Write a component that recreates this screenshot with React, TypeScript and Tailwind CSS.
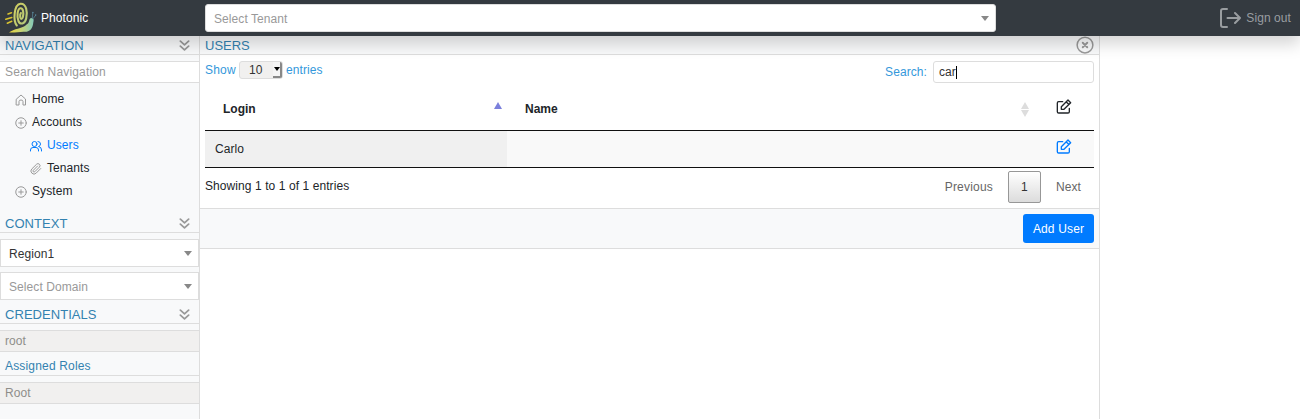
import React from "react";

function Icon({ size, width = 2, className = "", children }: { size: number; width?: number; className?: string; children: React.ReactNode }) {
  return (
    <svg width={size} height={size} viewBox="0 0 24 24" fill="none" stroke="currentColor" strokeWidth={width} strokeLinecap="round" strokeLinejoin="round" className={className}>
      {children}
    </svg>
  );
}

function Snail() {
  return (
    <svg width="32" height="32" viewBox="0 0 32 32" fill="none" strokeLinecap="round">
      <defs>
        <linearGradient id="shell" x1="0" y1="0" x2="1" y2="1">
          <stop offset="0" stopColor="#d2cf62" />
          <stop offset="1" stopColor="#b3c97c" />
        </linearGradient>
        <linearGradient id="body" x1="0" y1="0" x2="1" y2="0">
          <stop offset="0" stopColor="#e6d33c" />
          <stop offset="0.55" stopColor="#c2d27a" />
          <stop offset="1" stopColor="#83c9b9" />
        </linearGradient>
      </defs>
      <path d="M3 12 6.500 10.700M.8 17.200l6-1.700M2.300 21.200l4.500-2" stroke="#d9c431" strokeWidth="1.5" />
      <path d="M11.800 23.500C8 19 8.800 2.500 15.500 1.800c6-.4 7.200 8.400 5.700 14.700-1.300 5.500-6 6.700-7.800 2.500-1.700-4.500-1-12.200 2-12.700 3-.4 3.400 5.200 2.500 8.700-.7 2.600-2.400 2.400-2.700.2-.2-1.800 0-3.500.7-4.200" stroke="url(#shell)" strokeWidth="2.100" />
      <path d="M4 30.500C9 26.500 17 26.500 20.500 23.500c1.500-1.700 2.500-1.500 3.200-3.300.7-2 .8-4.200 2.900-4.200 2.500.1 2.200 2.300 1.700 4.500C27.700 26 25.500 30 19.500 29.800c-5-.2-10 1.200-15.500.7Z" fill="url(#body)" />
      <path d="m27.300 16 .5-5M28.200 16.500l2.300-3" stroke="#4f7484" strokeWidth="1" />
      <path d="M27.900 10.500v.1M30.700 13v.1" stroke="#5f97ad" strokeWidth="1.3" />
    </svg>
  );
}

function Heading({ children }: { children: React.ReactNode }) {
  return (
    <div className="flex h-[19px] shrink-0 items-center justify-between border-b border-[#ddd] pl-[5px] pr-[9px] text-[13px] leading-[18px] tracking-[0.05px] text-[#3382b0]">
      <span className="pt-px">{children}</span>
      <Icon size={11} width={3.8} className="text-[#999]">
        <path d="m3 2.500 9 8 9-8M3 13.500l9 8 9-8" />
      </Icon>
    </div>
  );
}

function Caret() {
  return <span className="border-x-4 border-t-[5px] border-x-transparent border-t-[#888]" />;
}

function EditIcon({ className }: { className: string }) {
  return (
    <Icon size={16} className={className}>
      <path d="M10 4H4a2 2 0 0 0-2 2v13a2 2 0 0 0 2 2h14a2 2 0 0 0 2-2v-5" />
      <path d="m18 1.500 4 4L12 15.500H8v-4ZM15.500 4.500l3.500 3.500" />
    </Icon>
  );
}

const plus = (
  <>
    <circle cx="12" cy="12" r="10.500" />
    <path d="M12 7.500v9M7.500 12h9" />
  </>
);

function TreeItem({ label, icon, nested, active }: { label: string; icon: React.ReactNode; nested?: boolean; active?: boolean }) {
  return (
    <div className={`flex h-[23px] items-center ${nested ? "pl-[30px]" : "pl-[15px]"} ${active ? "text-[#007bff]" : "text-[#212529]"}`}>
      <span className={`mr-[5px] w-3 pt-[3px] ${active ? "text-[#007bff]" : "text-[#999]"}`}>{icon}</span>
      {label}
    </div>
  );
}

function SideSelect({ text, muted }: { text: string; muted?: boolean }) {
  return (
    <div className={`flex h-7 shrink-0 items-center justify-between border border-[#ddd] bg-white pl-2 pr-[6px] ${muted ? "text-[#999]" : "text-[#333]"}`}>
      <span className="pt-[2px]">{text}</span>
      <Caret />
    </div>
  );
}

function ReadOnly({ text }: { text: string }) {
  return <div className="mt-1.5 h-[22px] shrink-0 border-y border-[#ddd] bg-[#f1f0ef] pl-[5px] leading-5 text-[#8e8e8a]">{text}</div>;
}

export default function App() {
  return (
    <div className="flex h-[419px] w-[1300px] flex-col overflow-hidden bg-white font-['Liberation_Sans',Arial,sans-serif] text-xs tracking-[0.08px] text-[#212529]">
      <header className="relative z-10 flex h-9 shrink-0 items-center bg-[#343a40] shadow-[0_8px_16px_rgba(0,0,0,0.17)]">
        <div className="flex w-[205px] items-center gap-[4px] pl-[5px] text-white">
          <Snail />
          Photonic
        </div>
        <div className="flex h-7 w-[791px] items-center justify-between rounded-[3px] border border-[#ddd] bg-white pl-2 pr-1.5 text-[#999]">
          <span className="pt-[2px]">Select Tenant</span>
          <Caret />
        </div>
        <div className="ml-auto flex items-center gap-[5px] pr-[9px] text-[#999da0]">
          <svg width="21" height="20" viewBox="0 0 21 20" fill="none" stroke="currentColor" strokeWidth="2" strokeLinecap="round" strokeLinejoin="round">
            <path d="M7 1H3Q1 1 1 3v14q0 2 2 2h4M7.500 10H20M15 5l5 5-5 5" />
          </svg>
          Sign out
        </div>
      </header>

      <div className="flex min-h-0 flex-1">
        <aside className="flex w-[200px] flex-col border-r border-[#ddd] bg-[#f8f9fa]">
          <Heading>NAVIGATION</Heading>
          <div className="mt-1.5 h-[22px] shrink-0 border-y border-[#ddd] bg-white pl-[5px] leading-5 tracking-[0.17px] text-[#999]">Search Navigation</div>
          <nav className="mb-3 mt-1">
            <TreeItem label="Home" icon={<Icon size={12}><path d="M3 10 12 2l9 8v12h-5v-7q0-3-4-3t-4 3v7H3Z" /></Icon>} />
            <TreeItem label="Accounts" icon={<Icon size={12}>{plus}</Icon>} />
            <TreeItem nested active label="Users" icon={<Icon size={12}><circle cx="9" cy="8" r="5" /><path d="M1 22v-2q0-5 5-5h6q5 0 5 5v2M16 3q5 0 5 5 0 4-4 5 6 1 6 7v2" /></Icon>} />
            <TreeItem
              nested
              label="Tenants"
              icon={
                <Icon size={12}>
                  <path d="m21.500 11-9.200 9.300a6 6 0 0 1-8.600-8.500l9.400-9.300a4 4 0 0 1 5.700 5.700l-9.300 9.300a2 2 0 0 1-2.900-2.900l8.500-8.500" />
                </Icon>
              }
            />
            <TreeItem label="System" icon={<Icon size={12}>{plus}</Icon>} />
          </nav>
          <Heading>CONTEXT</Heading>
          <div className="mb-[5px] mt-1.5 flex flex-col gap-[5px]">
            <SideSelect text="Region1" />
            <SideSelect text="Select Domain" muted />
          </div>
          <Heading>CREDENTIALS</Heading>
          <ReadOnly text="root" />
          <div className="mt-[5px] h-[19px] shrink-0 border-b border-[#ddd] pl-[5px] leading-[18px] tracking-[0.17px] text-[#3382b0]">Assigned Roles</div>
          <ReadOnly text="Root" />
        </aside>

        <main className="w-[900px] border-r border-[#ddd]">
          <div className="flex h-[19px] items-center justify-between border-b border-[#ddd] bg-[#f8f9fa] pl-[5px] pr-[5px] text-[13px] leading-[18px] tracking-normal text-[#3382b0]">
            <span className="pt-px">USERS</span>
            <Icon size={18} className="text-[#999]">
              <circle cx="12" cy="12" r="10.500" />
              <path d="m9 9 6 6M15 9l-6 6" strokeWidth="2.500" />
            </Icon>
          </div>
          <div className="px-[5px] pt-1.5">
            <div className="flex h-[22px] items-start justify-between text-[#3498db]">
              <div className="flex h-[18px] items-center">
                <span className="w-[34px] tracking-[0.2px]">Show</span>
                <span className="mr-[3px] flex h-[18px] w-11 items-center justify-between rounded-[3px] border border-[#ddd] bg-[#f1f0ef] pl-[9px] text-[#333]">
                  10
                  <span className="flex h-4 w-[9px] items-center justify-center rounded-r-[2px] border-b-2 border-r-2 border-[#888] bg-[#f5f5f5]">
                    <span className="border-x-[3px] border-t-4 border-x-transparent border-t-black" />
                  </span>
                </span>
                entries
              </div>
              <div className="flex items-center">
                Search:
                <span className="ml-1.5 flex h-[22px] w-[161px] items-center rounded-[3px] border border-[#ddd] bg-white pl-[5px] text-[#333]">
                  car<span className="h-[13px] w-px bg-black" />
                </span>
              </div>
            </div>
            <div className="mt-1 grid h-11 grid-cols-[302px_528px_59px] items-center border-b border-[#111] font-bold tracking-normal">
              <div className="flex items-center justify-between pl-[18px] pr-[5px]">
                Login
                <span className="mb-[6px] border-x-4 border-b-[7px] border-x-transparent border-b-[#7b80dc]" />
              </div>
              <div className="flex items-center justify-between pl-[18px] pr-[6px]">
                Name
                <span className="flex flex-col gap-px pt-px">
                  <span className="border-x-4 border-b-[7px] border-x-transparent border-b-[#ddd]" />
                  <span className="border-x-4 border-t-[7px] border-x-transparent border-t-[#ddd]" />
                </span>
              </div>
              <EditIcon className="mb-[3px] ml-[21px]" />
            </div>
            <div className="grid h-[37px] grid-cols-[302px_528px_59px] border-b border-[#111] bg-[#f9f9f9]">
              <div className="bg-[#f0f0f0] pl-2.5 leading-9">Carlo</div>
              <div />
              <EditIcon className="ml-[21px] mt-2 text-[#007bff]" />
            </div>
            <div className="mt-[3px] flex h-[37px] items-start justify-between">
              <span className="leading-[31px]">Showing 1 to 1 of 1 entries</span>
              <div className="flex h-8 items-center text-[#666]">
                <span className="mr-[15px] tracking-[0.2px]">Previous</span>
                <span className="flex h-8 w-[33px] items-center justify-center rounded-[2px] border border-[#979797] bg-linear-to-b from-white to-[#dcdcdc] text-[#333]">1</span>
                <span className="ml-[15px] w-[38px]">Next</span>
              </div>
            </div>
          </div>
          <div className="flex h-[41px] items-center justify-end border-y border-[#ddd] bg-[#f8f9fa] pr-[5px]">
            <button className="h-[29px] w-[71px] rounded-[3px] bg-[#007bff] tracking-[0.15px] text-white">Add User</button>
          </div>
        </main>
      </div>
    </div>
  );
}
